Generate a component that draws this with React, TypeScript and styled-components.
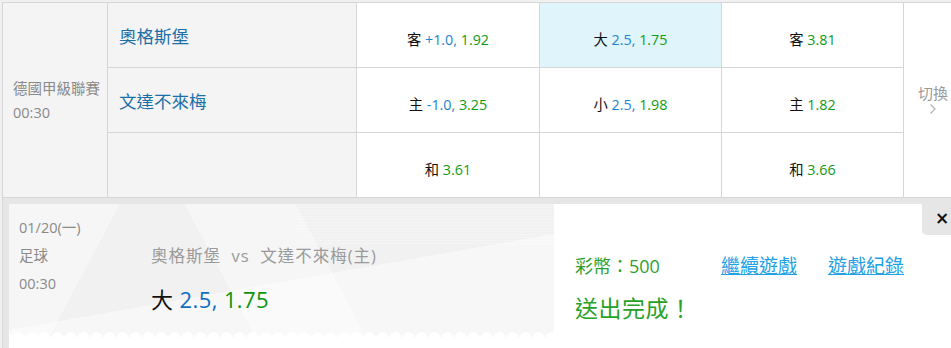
import React from "react";
import styled, { createGlobalStyle } from "styled-components";

const Global = createGlobalStyle`
  html, body { margin: 0; padding: 0; background: #f3f3f3; overflow: hidden; }
  body { font-family: "Open Sans", "Noto Sans CJK TC", sans-serif; }
  #root { width: 951px; height: 348px; overflow: hidden; }
`;

const Page = styled.div`
  padding: 2px 0 0 2px;
  background: linear-gradient(#f0f0f0, #f0f0f0) top / 100% 2px no-repeat,
    linear-gradient(#f0f0f0, #f0f0f0) left / 2px 100% no-repeat, #fff;
  width: 1000px;
  height: 348px;
  box-sizing: border-box;
`;

const Frame = styled.div`
  border-left: 1px solid #d6d6d6;
  height: 100%;
  display: flex;
  flex-direction: column;
`;

const Grid = styled.div`
  display: grid;
  grid-template-columns: 105px 249px 183px 182px 182px 60px;
  grid-template-rows: repeat(3, 65px);
  border-top: 1px solid #d6d6d6;
  font-size: 14.3px;
`;

const Cell = styled.div<{ $bg?: string; $col?: number; $span?: boolean; $last?: boolean }>`
  box-sizing: border-box;
  border-right: 1px solid #d6d6d6;
  border-bottom: 1px solid #d6d6d6;
  background: ${(p) => p.$bg || "#fff"};
  ${(p) => (p.$col ? `grid-column: ${p.$col};` : "")}
  ${(p) => (p.$span ? "grid-row: 1 / span 3;" : "")}
  ${(p) => (p.$last ? "border-right: none;" : "")}
`;

const League = styled(Cell)`
  display: flex;
  flex-direction: column;
  justify-content: center;
  padding-left: 10px;
  color: #8a8a8a;
  font-size: 14.5px;
  line-height: 24px;
  padding-top: 2px;
`;

const Team = styled(Cell)`
  display: flex;
  align-items: center;
  padding-left: 11px;
  color: #1b6fa9;
  font-size: 17.5px;
`;

const Odds = styled(Cell)`
  display: flex;
  align-items: center;
  justify-content: center;
  padding-top: 6px;
  color: #111;
`;

const OddsText = styled.span`
  white-space: pre;
`;

const Blue = styled.span`
  color: #1f84d0;
`;
const Green = styled.span`
  color: #139a13;
`;

const Switch = styled(Cell)`
  display: flex;
  flex-direction: column;
  align-items: center;
  justify-content: center;
  color: #9a9a9a;
  font-size: 15px;
  line-height: 20px;
  padding-right: 2px;
  padding-bottom: 2px;
`;

const Chevron = styled.svg`
  margin-top: 0px;
`;

const Bottom = styled.div`
  flex: 1;
  background: #e6e6e6;
  padding: 6px 0 0 6px;
  display: flex;
`;

const Panel = styled.div`
  position: relative;
  flex: 1;
  background: #fff;
  display: flex;
  align-items: flex-start;
`;

const Ticket = styled.div`
  position: relative;
  width: 545px;
  height: 133px;
  box-sizing: border-box;
  padding: 10px 10px 0 10px;
  display: flex;
  background:
    linear-gradient(170deg, transparent 0 55%, rgba(255,255,255,0.45) 55% 100%),
    linear-gradient(62deg, transparent 0 40%, rgba(255,255,255,0.35) 40% 58%, transparent 58%),
    linear-gradient(118deg, rgba(255,255,255,0.35) 0 18%, transparent 18%),
    repeating-linear-gradient(0deg, rgba(255,255,255,0.25) 0 1px, transparent 1px 3px) top right / 260px 40px no-repeat,
    #f1f1f1;
  &::after {
    content: "";
    position: absolute;
    left: 0;
    right: 0;
    bottom: -1px;
    height: 6px;
    background: radial-gradient(circle at 50% 100%, #fff 0 5.5px, transparent 6px) 3px 0 / 13px 6px repeat-x;
  }
`;

const Meta = styled.div`
  width: 132px;
  color: #8a8a8a;
  font-size: 14.5px;
  line-height: 28px;
`;

const Bet = styled.div`
  display: flex;
  flex-direction: column;
  padding-top: 30px;
`;

const Match = styled.div`
  color: #9a9a9a;
  font-size: 16.5px;
  line-height: 24px;
  white-space: pre;
  letter-spacing: 1px;
`;

const Pick = styled.div`
  margin-top: 17px;
  color: #111;
  font-size: 22px;
  line-height: 28px;
  white-space: pre;
  letter-spacing: 0.4px;
`;

const PickBlue = styled.span`
  color: #0f6fbe;
`;
const PickGreen = styled.span`
  color: #0c960c;
`;

const Result = styled.div`
  padding: 50px 0 0 21px;
  display: flex;
  flex-direction: column;
`;

const ResultRow = styled.div`
  display: flex;
  align-items: baseline;
`;

const Coins = styled.div`
  width: 146px;
  color: #2f9f2f;
  font-size: 18px;
  line-height: 24px;
`;

const Link = styled.a`
  color: #21a1e6;
  font-size: 19px;
  text-decoration: underline;
  margin-right: 31px;
  line-height: 24px;
  cursor: pointer;
`;

const Done = styled.div`
  margin-top: 15px;
  color: #27a127;
  font-size: 23px;
  line-height: 30px;
  letter-spacing: 0.5px;
`;

const Close = styled.div`
  position: absolute;
  top: 0;
  left: 913px;
  width: 40px;
  height: 31px;
  background: #e6e6e6;
  border-bottom-left-radius: 5px;
  display: flex;
  align-items: center;
  padding-left: 13px;
  box-sizing: border-box;
  color: #111;
  font-size: 17px;
  font-weight: 700;
  font-family: "DejaVu Sans", sans-serif;
  padding-bottom: 3px;
`;

const O = ({ label, hdp, odd, bg }: { label: string; hdp?: string; odd: string; bg?: string }) => (
  <Odds $bg={bg}>
    <OddsText>
      {label + " "}
      {hdp ? <Blue>{hdp + " "}</Blue> : null}
      <Green>{odd}</Green>
    </OddsText>
  </Odds>
);

export default function App() {
  return (
    <>
      <Global />
      <Page>
        <Frame>
          <Grid>
            <League $bg="#f4f4f4" $col={1} $span>
              <div>德國甲級聯賽</div>
              <div>00:30</div>
            </League>
            <Switch $col={6} $span $last>
              <div>切換</div>
              <Chevron width="8" height="12" viewBox="0 0 8 12">
                <path d="M1.5 1.5 L6 6 L1.5 10.5" fill="none" stroke="#b5b5b5" strokeWidth="1.3" />
              </Chevron>
            </Switch>
            <Team $bg="#f4f4f4">奧格斯堡</Team>
            <O label="客" hdp="+1.0," odd="1.92" />
            <O label="大" hdp="2.5," odd="1.75" bg="#e0f4fc" />
            <O label="客" odd="3.81" />
            <Team $bg="#f4f4f4">文達不來梅</Team>
            <O label="主" hdp="-1.0," odd="3.25" />
            <O label="小" hdp="2.5," odd="1.98" />
            <O label="主" odd="1.82" />
            <Cell $bg="#f4f4f4" />
            <O label="和" odd="3.61" />
            <Cell />
            <O label="和" odd="3.66" />
          </Grid>
          <Bottom>
            <Panel>
              <Ticket>
                <Meta>
                  <div>01/20(一)</div>
                  <div>足球</div>
                  <div>00:30</div>
                </Meta>
                <Bet>
                  <Match>{"奧格斯堡  vs  文達不來梅(主)"}</Match>
                  <Pick>
                    {"大 "}
                    <PickBlue>{"2.5, "}</PickBlue>
                    <PickGreen>1.75</PickGreen>
                  </Pick>
                </Bet>
              </Ticket>
              <Result>
                <ResultRow>
                  <Coins>彩幣：500</Coins>
                  <Link>繼續遊戲</Link>
                  <Link>遊戲紀錄</Link>
                </ResultRow>
                <Done>送出完成！</Done>
              </Result>
              <Close>×</Close>
            </Panel>
          </Bottom>
        </Frame>
      </Page>
    </>
  );
}
